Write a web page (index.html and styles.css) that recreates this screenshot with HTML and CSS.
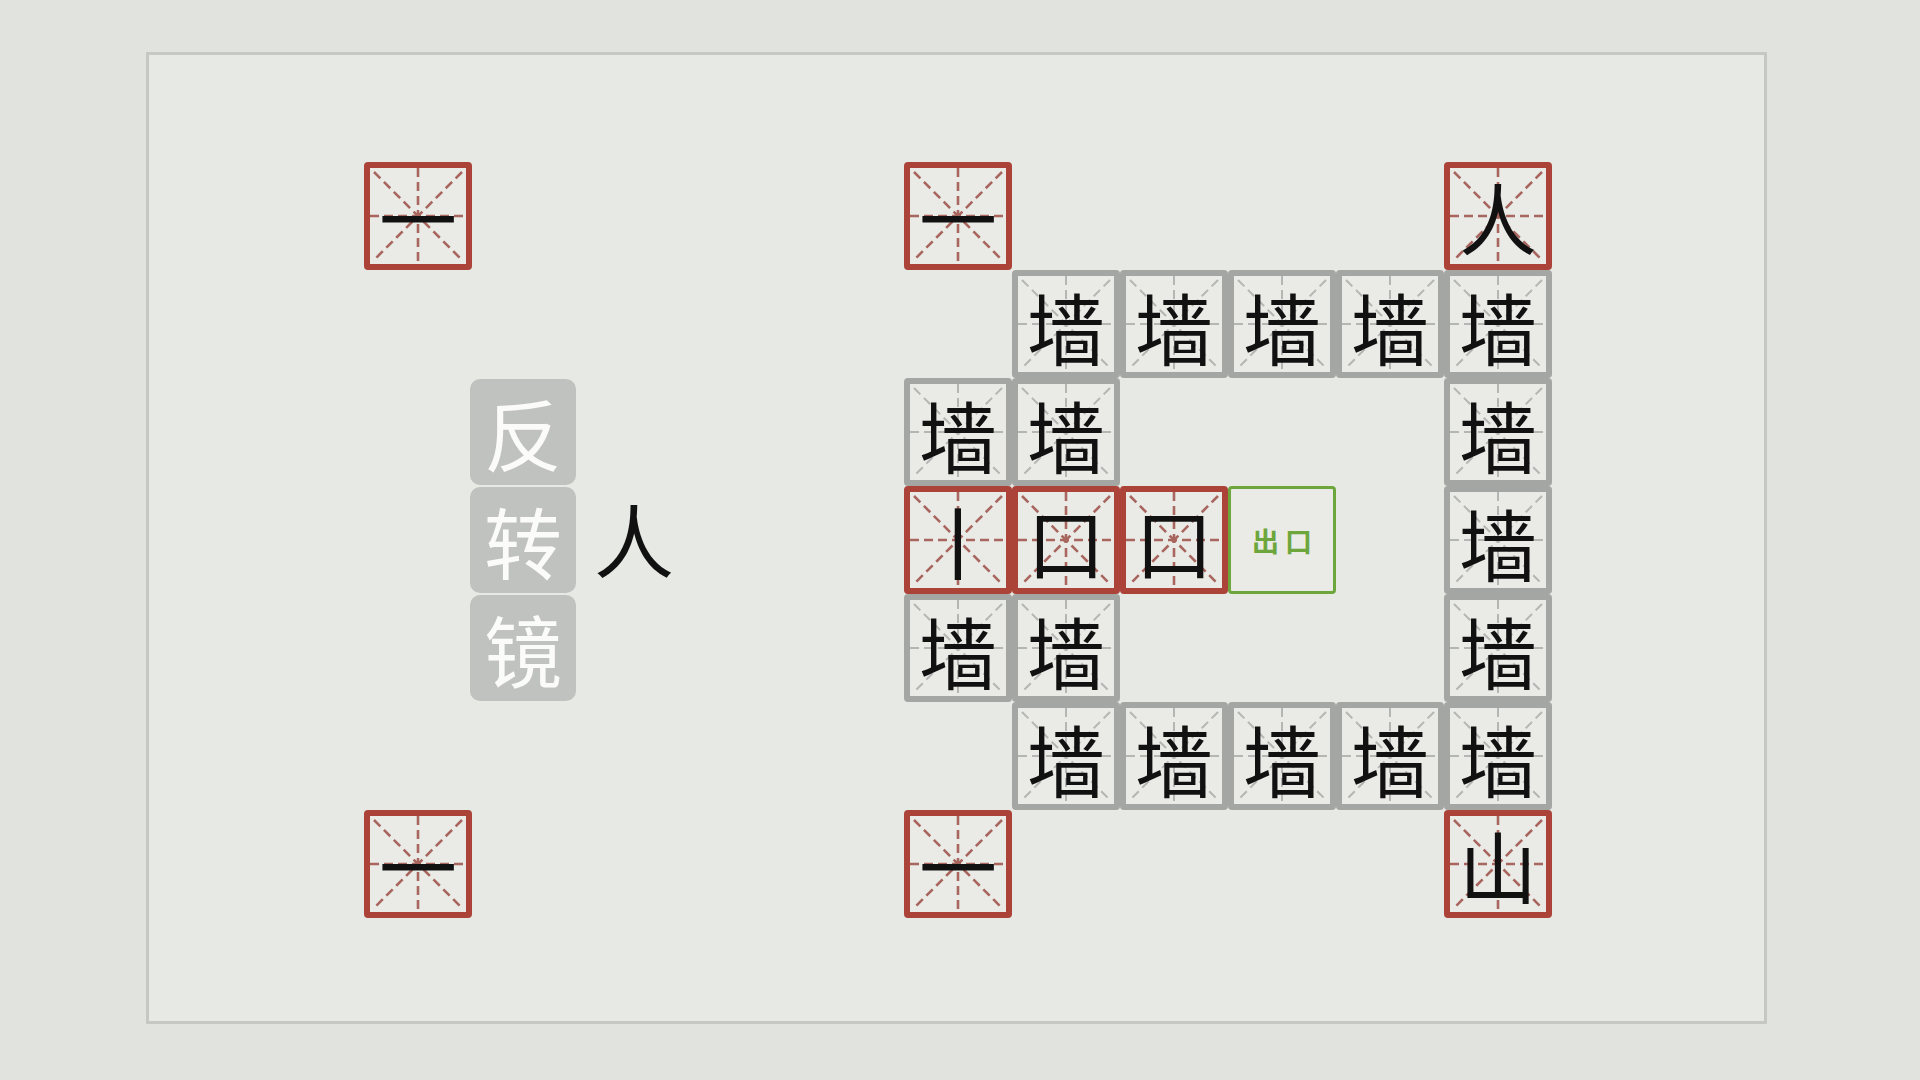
FILE: index.html
```html
<!DOCTYPE html>
<html lang="zh-CN">
<head>
<meta charset="utf-8">
<title>反转镜</title>
<link rel="stylesheet" href="styles.css">
</head>
<body>
<div class="frame">
  <div class="board">
    <div class="cell red c1 r1">一</div>
    <div class="cell red c1 r7">一</div>

    <div class="tag c2 r3">反</div>
    <div class="tag c2 r4">转</div>
    <div class="tag c2 r5">镜</div>
    <div class="plain c3 r4">人</div>

    <div class="cell red c6 r1">一</div>
    <div class="cell red c11 r1">人</div>

    <div class="cell wall c7 r2">墙</div>
    <div class="cell wall c8 r2">墙</div>
    <div class="cell wall c9 r2">墙</div>
    <div class="cell wall c10 r2">墙</div>
    <div class="cell wall c11 r2">墙</div>

    <div class="cell wall c6 r3">墙</div>
    <div class="cell wall c7 r3">墙</div>
    <div class="cell wall c11 r3">墙</div>

    <div class="cell red c6 r4">丨</div>
    <div class="cell red c7 r4">口</div>
    <div class="cell red c8 r4">口</div>
    <div class="exit c9 r4">出口</div>
    <div class="cell wall c11 r4">墙</div>

    <div class="cell wall c6 r5">墙</div>
    <div class="cell wall c7 r5">墙</div>
    <div class="cell wall c11 r5">墙</div>

    <div class="cell wall c7 r6">墙</div>
    <div class="cell wall c8 r6">墙</div>
    <div class="cell wall c9 r6">墙</div>
    <div class="cell wall c10 r6">墙</div>
    <div class="cell wall c11 r6">墙</div>

    <div class="cell red c6 r7">一</div>
    <div class="cell red c11 r7">山</div>
  </div>
</div>
</body>
</html>
```

FILE: styles.css
```css
html, body {
  margin: 0;
  padding: 0;
}
body {
  width: 1920px;
  height: 1080px;
  background: #e1e3de;
  overflow: hidden;
  padding-top: 52px;
  box-sizing: border-box;
}
.frame {
  margin-left: 146px;
  width: 1621px;
  height: 972px;
  box-sizing: border-box;
  border: 3px solid #c6c8c4;
  background: #e7e9e4;
  padding: 107px 0 0 215px;
}
.board {
  display: grid;
  grid-template-columns: repeat(11, 108px);
  grid-template-rows: repeat(7, 108px);
}
.c1 { grid-column: 1; } .c2 { grid-column: 2; } .c3 { grid-column: 3; }
.c4 { grid-column: 4; } .c5 { grid-column: 5; } .c6 { grid-column: 6; }
.c7 { grid-column: 7; } .c8 { grid-column: 8; } .c9 { grid-column: 9; }
.c10 { grid-column: 10; } .c11 { grid-column: 11; }
.r1 { grid-row: 1; } .r2 { grid-row: 2; } .r3 { grid-row: 3; }
.r4 { grid-row: 4; } .r5 { grid-row: 5; } .r6 { grid-row: 6; } .r7 { grid-row: 7; }

.cell {
  box-sizing: border-box;
  width: 108px;
  height: 108px;
  border: 6px solid;
  border-radius: 4px;
  background-color: #eaebe7;
  background-repeat: no-repeat;
  background-size: 100% 100%;
  display: flex;
  align-items: center;
  justify-content: center;
  font-family: "Noto Sans CJK SC", sans-serif;
  font-size: 78px;
  line-height: 1;
  color: #111;
}
.red {
  border-color: #ab4339;
  background-image: url("data:image/svg+xml;utf8,<svg xmlns='http://www.w3.org/2000/svg' viewBox='0 0 96 96' preserveAspectRatio='none'><g stroke='%23a8665e' stroke-width='2.6' stroke-dasharray='9 5' fill='none'><line x1='4' y1='4' x2='92' y2='92'/><line x1='92' y1='4' x2='4' y2='92'/><line x1='48' y1='0' x2='48' y2='96'/><line x1='0' y1='48' x2='96' y2='48'/></g></svg>");
}
.wall {
  border-color: #a4a6a3;
  padding-top: 4px;
  background-image: url("data:image/svg+xml;utf8,<svg xmlns='http://www.w3.org/2000/svg' viewBox='0 0 96 96' preserveAspectRatio='none'><g stroke='%23b4b6b3' stroke-width='2' stroke-dasharray='9 5' fill='none'><line x1='4' y1='4' x2='92' y2='92'/><line x1='92' y1='4' x2='4' y2='92'/><line x1='48' y1='0' x2='48' y2='96'/><line x1='0' y1='48' x2='96' y2='48'/></g></svg>");
}

.tag {
  box-sizing: border-box;
  width: 106px;
  height: 106px;
  margin: 1px 0 1px -2px;
  border-radius: 10px;
  background: #c0c2bf;
  color: #fbfbfa;
  display: flex;
  align-items: center;
  justify-content: center;
  font-family: "Noto Sans CJK SC", sans-serif;
  font-weight: 400;
  font-size: 78px;
  line-height: 1;
}
.plain {
  display: flex;
  align-items: center;
  justify-content: center;
  font-family: "Noto Sans CJK SC", sans-serif;
  font-size: 80px;
  line-height: 1;
  color: #111;
  padding-bottom: 6px;
}
.exit {
  box-sizing: border-box;
  width: 108px;
  height: 108px;
  border: 3px solid #6ea63e;
  border-radius: 4px;
  background: #eaebe7;
  display: flex;
  align-items: center;
  justify-content: center;
  font-family: "Noto Sans CJK SC", sans-serif;
  font-weight: 700;
  font-size: 27px;
  letter-spacing: 6px;
  padding-left: 6px;
  color: #6ea63e;
}
```
